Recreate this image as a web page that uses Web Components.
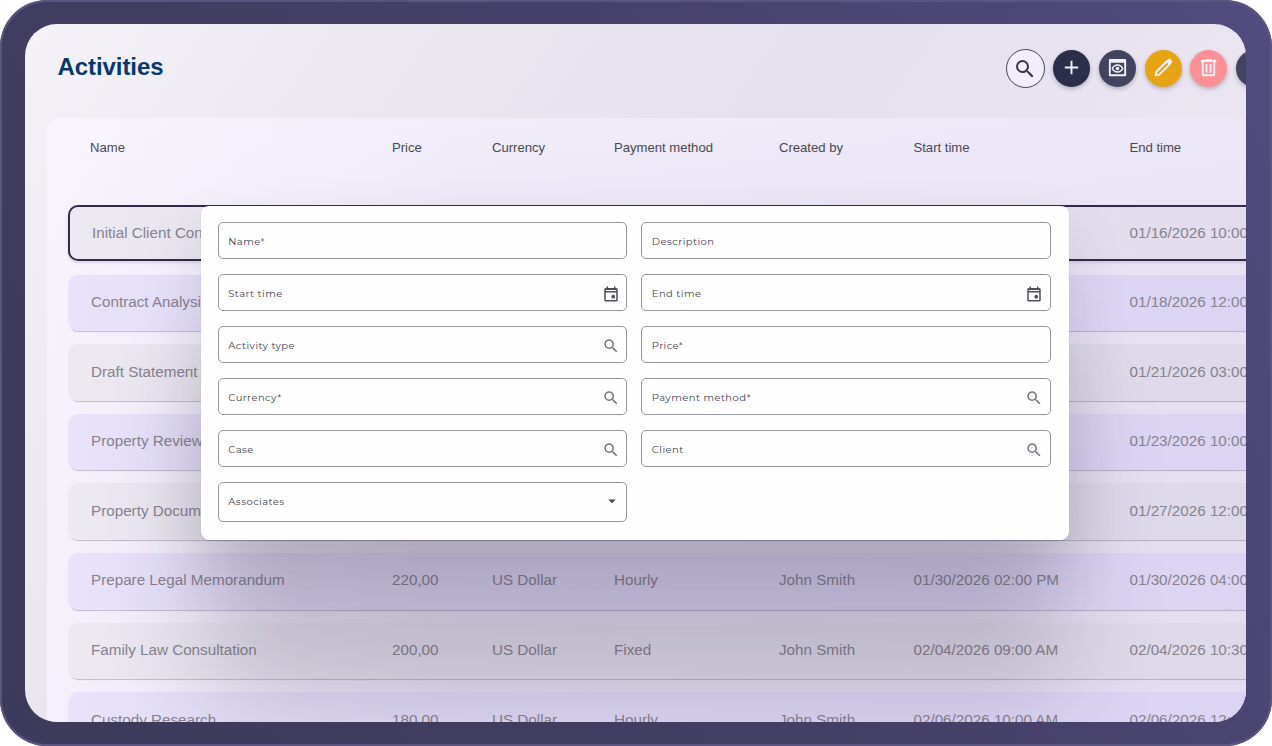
<!DOCTYPE html>
<html lang="en">
<head>
<meta charset="utf-8">
<title>Activities</title>
<style>
  html, body { margin: 0; height: 100%; overflow: hidden; background: #fff; }
  body { font-family: "Liberation Sans", Arial, sans-serif; }
</style>
</head>
<body>
<device-frame>
  <page-header heading="Activities">
    <round-button class="outline" icon="search"></round-button>
    <round-button icon="add" style="--fill: #2c2e4a"></round-button>
    <round-button icon="preview" style="--fill: #42445f"></round-button>
    <round-button icon="edit" style="--fill: #e6a414"></round-button>
    <round-button icon="delete" style="--fill: #fd9096"></round-button>
    <round-button style="--fill: #42445f"></round-button>
  </page-header>
  <activity-table></activity-table>
  <form-dialog slot="overlay">
    <form-field label="Name*"></form-field>
    <form-field label="Description"></form-field>
    <form-field label="Start time" icon="event"></form-field>
    <form-field label="End time" icon="event"></form-field>
    <form-field label="Activity type" icon="search"></form-field>
    <form-field label="Price*"></form-field>
    <form-field label="Currency*" icon="search"></form-field>
    <form-field label="Payment method*" icon="search"></form-field>
    <form-field label="Case" icon="search"></form-field>
    <form-field label="Client" icon="search"></form-field>
    <form-field label="Associates" icon="dropdown" class="tall"></form-field>
  </form-dialog>
</device-frame>

<script>
const ICONS = {
  search: '<path d="M15.5 14h-.79l-.28-.27A6.47 6.47 0 0 0 16 9.5 6.5 6.5 0 1 0 9.5 16c1.61 0 3.09-.59 4.23-1.57l.27.28v.79l5 4.99L20.49 19l-4.99-5zm-6 0C7.01 14 5 11.99 5 9.5S7.01 5 9.5 5 14 7.01 14 9.5 11.99 14 9.5 14z"/>',
  add: '<path d="M11 5h2v6h6v2h-6v6h-2v-6H5v-2h6z"/>',
  preview: '<path fill-rule="evenodd" d="M4 3h16a1 1 0 0 1 1 1v16a1 1 0 0 1-1 1H4a1 1 0 0 1-1-1V4a1 1 0 0 1 1-1zm1 4v12h14V7z"/><path fill-rule="evenodd" d="M12 8.600c2.900 0 5.300 1.700 6.300 4.400-1 2.700-3.400 4.400-6.300 4.400S6.700 15.700 5.700 13c1-2.700 3.400-4.400 6.300-4.400zm0 1.500c-2 0-3.600 1.100-4.500 2.900.9 1.800 2.500 2.900 4.500 2.900s3.600-1.100 4.500-2.900c-.9-1.800-2.500-2.900-4.500-2.900z"/><circle cx="12" cy="13" r="1.800"/>',
  edit: '<path d="M3.900 20.100l.7-3.700L15.800 5.200l3 3L7.600 19.400z" fill="none" stroke="currentColor" stroke-width="2" stroke-linejoin="round"/><path d="M14.400 5.800l3.800 3.800 2.500-2.500a1.800 1.800 0 0 0 0-2.500l-1.300-1.300a1.800 1.800 0 0 0-2.500 0z"/>',
  delete: '<path fill-rule="evenodd" d="M9 3h6v1h5v2.200h-1V19a2 2 0 0 1-2 2H7a2 2 0 0 1-2-2V6.200H4V4h5zM7 6.200V19h10V6.200zm1.800 1.800H11v9.200H8.800zM13 8h2.200v9.200H13z"/>',
  event: '<path fill-rule="evenodd" d="M6 2h2v2h8V2h2v2h1a2 2 0 0 1 2 2v14a2 2 0 0 1-2 2H5a2 2 0 0 1-2-2V6a2 2 0 0 1 2-2h1zM5 6.500V8h14V6.500zm0 3.500v10h14V10z"/><circle cx="15" cy="15.500" r="2.500"/>',
  dropdown: '<path d="M7 10l5 5 5-5z"/>',
};

const icon = (name) => ICONS[name]
  ? `<svg viewBox="0 0 24 24" fill="currentColor" aria-hidden="true">${ICONS[name]}</svg>`
  : '';

class DeviceFrame extends HTMLElement {
  constructor() {
    super();
    this.attachShadow({ mode: 'open' }).innerHTML = `
      <style>
        :host {
          display: flex;
          box-sizing: border-box;
          width: 1272px;
          height: 746px;
          padding: 24px 26px 24px 25px;
          border-radius: 47px;
          background: linear-gradient(60deg, #3c3a5a 0%, #443f65 50%, #514b7f 100%);
          box-shadow: inset 0 0 0 2px #5b5480;
        }
        .screen {
          position: relative;
          flex: 1;
          min-width: 0;
          display: flex;
          flex-direction: column;
          overflow: hidden;
          border-radius: 32px;
          background: linear-gradient(125deg, #f4f1f7 0%, #ece8f0 22%, #e4e0ee 48%, #ebe5f0 75%, #e3deec 100%);
        }
      </style>
      <div class="screen">
        <slot></slot>
        <slot name="overlay"></slot>
      </div>`;
  }
}

class PageHeader extends HTMLElement {
  constructor() {
    super();
    this.attachShadow({ mode: 'open' }).innerHTML = `
      <style>
        :host {
          display: flex;
          flex: none;
          justify-content: space-between;
          align-items: flex-start;
          box-sizing: border-box;
          height: 94px;
          padding: 25px 0 0 32.500px;
        }
        h1 {
          margin: 4px 0 0;
          font-size: 24px;
          line-height: 28px;
          letter-spacing: -.08px;
          color: #05386b;
        }
        /* the last button runs past the edge of the screen */
        .actions {
          display: flex;
          align-items: center;
          gap: 8.850px;
          margin-right: -26.800px;
        }
      </style>
      <h1></h1>
      <div class="actions"><slot></slot></div>`;
    this.shadowRoot.querySelector('h1').textContent = this.getAttribute('heading');
  }
}

class RoundButton extends HTMLElement {
  constructor() {
    super();
    this.attachShadow({ mode: 'open' }).innerHTML = `
      <style>
        :host {
          display: flex;
          flex: none;
          align-items: center;
          justify-content: center;
          box-sizing: border-box;
          width: 36.800px;
          height: 36.800px;
          border-radius: 50%;
          color: #f3eff8;
          background: var(--fill);
          box-shadow: 0 2px 4px rgba(50, 45, 80, .3);
        }
        :host(.outline) {
          width: 39px;
          height: 39px;
          border: 1px solid #45435a;
          color: #35334a;
          background: #f1edf9;
          box-shadow: none;
        }
        svg { width: 23px; height: 23px; margin-bottom: 2px; }
        :host(.outline) svg { width: 24px; height: 24px; margin: 0; }
      </style>
      ${icon(this.getAttribute('icon'))}`;
  }
}

class ActivityTable extends HTMLElement {
  columns = ['Name', 'Price', 'Currency', 'Payment method', 'Created by', 'Start time', 'End time'];

  rows = [
    ['Initial Client Consultation', '250,00', 'US Dollar', 'Hourly', 'John Smith', '01/16/2026 09:00 AM', '01/16/2026 10:00 AM'],
    ['Contract Analysis', '200,00', 'US Dollar', 'Hourly', 'John Smith', '01/18/2026 10:00 AM', '01/18/2026 12:00 PM'],
    ['Draft Statement', '220,00', 'US Dollar', 'Fixed', 'John Smith', '01/21/2026 01:00 PM', '01/21/2026 03:00 PM'],
    ['Property Review', '180,00', 'US Dollar', 'Hourly', 'John Smith', '01/23/2026 09:00 AM', '01/23/2026 10:00 AM'],
    ['Property Documents', '200,00', 'US Dollar', 'Fixed', 'John Smith', '01/27/2026 10:00 AM', '01/27/2026 12:00 PM'],
    ['Prepare Legal Memorandum', '220,00', 'US Dollar', 'Hourly', 'John Smith', '01/30/2026 02:00 PM', '01/30/2026 04:00 PM'],
    ['Family Law Consultation', '200,00', 'US Dollar', 'Fixed', 'John Smith', '02/04/2026 09:00 AM', '02/04/2026 10:30 AM'],
    ['Custody Research', '180,00', 'US Dollar', 'Hourly', 'John Smith', '02/06/2026 10:00 AM', '02/06/2026 12:00 PM'],
  ];

  constructor() {
    super();
    const cells = (values) => values.map((v) => `<span>${v}</span>`).join('');
    this.attachShadow({ mode: 'open' }).innerHTML = `
      <style>
        :host {
          display: block;
          flex: none;
          box-sizing: border-box;
          width: 1400px;
          height: 660px;
          margin-left: 22px;
          padding-left: 21.400px;
          border-radius: 12px 0 0 0;
          background:
            linear-gradient(90deg, rgba(249, 246, 254, .8) 0, rgba(249, 246, 254, 0) 420px),
            linear-gradient(172deg, #f3effa 0%, #ece8f7 18%, #e6e1f1 45%, #e1dcf0 100%);
        }
        .head, .row {
          display: grid;
          grid-template-columns: 301px 100px 122px 165px 134.500px 216px 1fr;
          box-sizing: border-box;
          padding-left: 22.600px;
          white-space: nowrap;
        }
        .head {
          height: 87px;
          padding-top: 22px;
          font-size: 13.100px;
          line-height: 16px;
          color: #4a4754;
        }
        .head span:first-child { margin-left: -1px; }
        .body {
          display: flex;
          flex-direction: column;
          gap: 13px;
        }
        .row {
          height: 56.600px;
          align-items: center;
          padding-bottom: 2.600px;
          border-radius: 10px;
          font-size: 15.230px;
          color: #87838f;
          background: linear-gradient(90deg, #ece9f1, #e2deec 350px, #dcd8e9);
          box-shadow: 0 3px 1px -2px rgba(70, 65, 85, .3);
        }
        .row:nth-child(even) {
          background: linear-gradient(90deg, #e8e2fa, #dfd8f4 350px, #dbd3f3);
        }
        .row:first-child {
          height: 56px;
          margin-bottom: .6px;
          border: 2px solid #2f2b49;
          padding-left: 20.600px;
          padding-bottom: 1px;
          background: linear-gradient(90deg, #ece9f1, #e3dfed 350px, #e2dced);
          box-shadow: 0 2px 3px rgba(70, 60, 100, .15);
        }
        .row:first-child span:first-child { margin-left: 1px; }
      </style>
      <div class="head">${cells(this.columns)}</div>
      <div class="body">${this.rows.map((r) => `<div class="row">${cells(r)}</div>`).join('')}</div>`;
  }
}

class FormDialog extends HTMLElement {
  constructor() {
    super();
    this.attachShadow({ mode: 'open' }).innerHTML = `
      <style>
        :host {
          position: absolute;
          top: 182px;
          left: 176px;
          display: grid;
          grid-template-columns: 1fr 1fr;
          align-content: start;
          gap: 15px 14px;
          box-sizing: border-box;
          width: 868px;
          height: 334px;
          padding: 16px 18.500px 0 16.500px;
          border-radius: 8px;
          background: #fefefe;
          box-shadow:
            0 1px 1px rgba(50, 45, 70, .2),
            0 30px 60px 0 rgba(50, 42, 70, .14),
            0 160px 100px -4px rgba(50, 42, 70, .2);
        }
      </style>
      <slot></slot>`;
  }
}

class FormField extends HTMLElement {
  constructor() {
    super();
    const name = this.getAttribute('icon');
    this.attachShadow({ mode: 'open' }).innerHTML = `
      <style>
        :host {
          display: flex;
          align-items: center;
          justify-content: space-between;
          box-sizing: border-box;
          height: 37px;
          padding: 0 6.500px 0 9.800px;
          border: 1px solid #96949f;
          border-radius: 5px;
          font: 10px/14px Montserrat, Inter, sans-serif;
          letter-spacing: .42px;
          color: #45424f;
        }
        :host(.tall) { height: 40px; }
        span { margin-top: 2px; }
        :host(.tall) span { margin-top: 0; }
        svg { width: 18px; height: 18px; }
        .search { margin-top: 3px; color: #77747e; }
        .event { margin-top: 3px; color: #504d5a; }
        .dropdown { margin: 0 -1px 3px 0; color: #45424f; }
        i { display: flex; }
      </style>
      <span></span>
      ${name ? `<i class="${name}">${icon(name)}</i>` : ''}`;
    this.shadowRoot.querySelector('span').textContent = this.getAttribute('label');
  }
}

customElements.define('device-frame', DeviceFrame);
customElements.define('page-header', PageHeader);
customElements.define('round-button', RoundButton);
customElements.define('activity-table', ActivityTable);
customElements.define('form-dialog', FormDialog);
customElements.define('form-field', FormField);
</script>
</body>
</html>
